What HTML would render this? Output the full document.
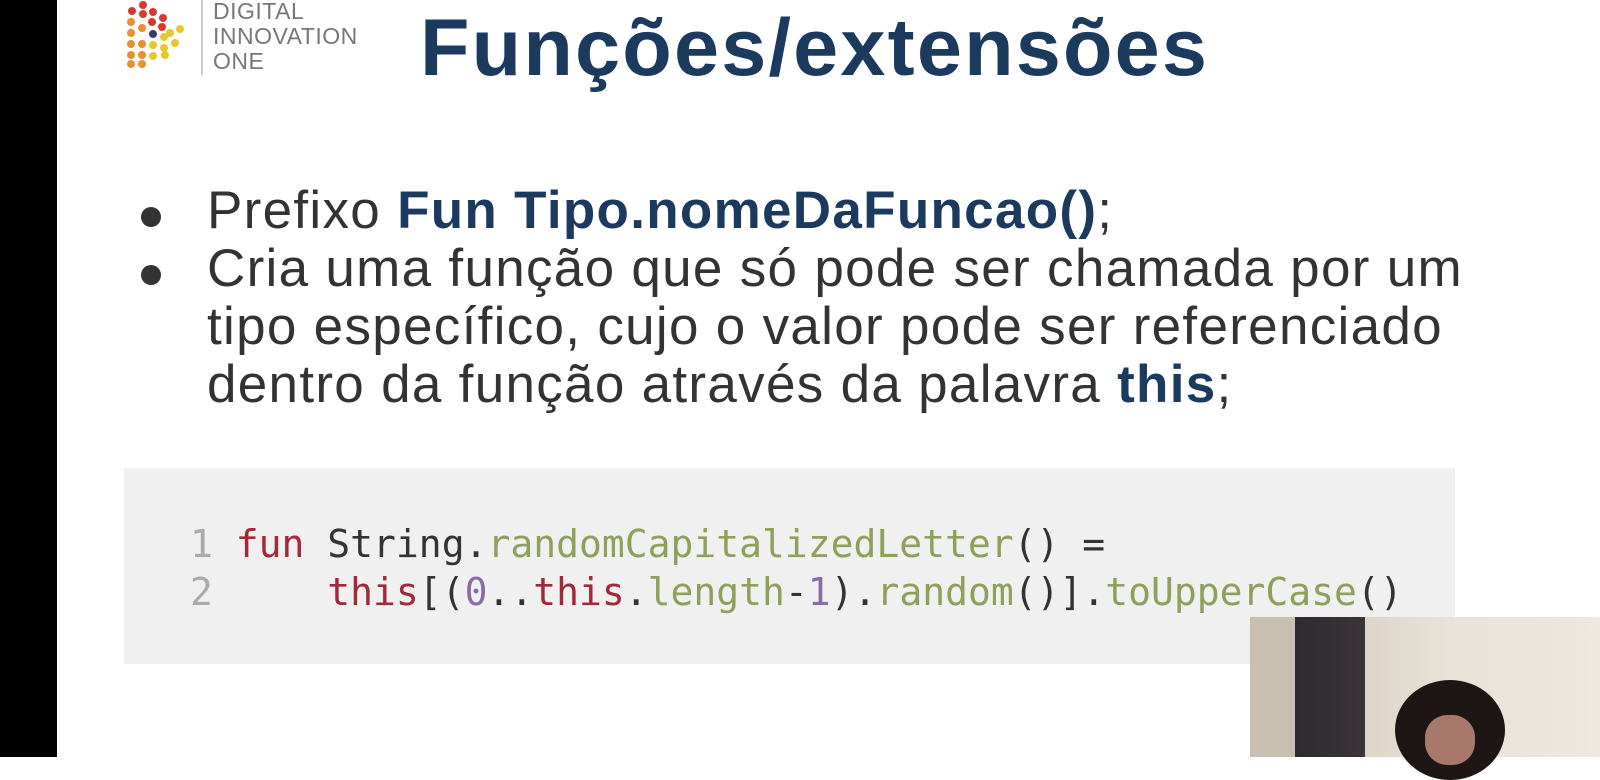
<!DOCTYPE html>
<html><head><meta charset="utf-8"><style>
body{margin:0;width:1600px;height:757px;overflow:hidden;background:#fff;position:relative;font-family:"Liberation Sans",sans-serif}
.blk{position:absolute;left:0;top:0;width:57px;height:757px;background:#000}
.t{position:absolute;left:420px;top:2px;font-size:81px;font-weight:bold;color:#1c3a5e;white-space:nowrap;letter-spacing:2.2px}
.logo-t{position:absolute;left:213px;top:-1px;font-size:23px;line-height:25px;color:#777;letter-spacing:0.5px}
.bar{position:absolute;left:201px;top:0;width:2px;height:75px;background:#ccc}
.b{position:absolute;left:207px;font-size:53px;color:#333;white-space:nowrap;letter-spacing:1.3px;line-height:60px}
.dot{position:absolute;left:141px;width:20px;height:20px;border-radius:50%;background:#333}
.code{position:absolute;left:124px;top:468px;width:1331px;height:196px;background:#f0f0f0}
.c{position:absolute;left:190px;font-family:"DejaVu Sans Mono",monospace;font-size:38px;white-space:pre;color:#333}
.n{color:#aaa}.k{color:#a2283a}.g{color:#8ea05a}.p{color:#8a6aa8}
.cam{position:absolute;left:1250px;top:617px;width:350px;height:140px;background:linear-gradient(90deg,#c9bfb0 0,#c9bfb0 45px,#2e2a30 45px,#3a3438 115px,#ddd5c8 115px,#e8e2d8 200px,#ede8e0 100%)}
.hair{position:absolute;left:1395px;top:680px;width:110px;height:100px;border-radius:50%;background:#1e1614}
.face{position:absolute;left:1425px;top:715px;width:50px;height:50px;border-radius:45%;background:#a8786a}
</style></head><body>
<div class="blk"></div>
<svg style="position:absolute;left:120px;top:0" width="70" height="72">
<g fill="#d63a2e"><circle cx="23" cy="5" r="4"/><circle cx="12" cy="11" r="4"/><circle cx="23" cy="14" r="4"/><circle cx="33" cy="12" r="4"/><circle cx="43" cy="18" r="4"/><circle cx="32" cy="22" r="4"/><circle cx="42" cy="27" r="4"/></g>
<g fill="#e8902e"><circle cx="11" cy="22" r="4"/><circle cx="11" cy="33" r="4"/><circle cx="11" cy="44" r="4"/><circle cx="11" cy="55" r="4"/><circle cx="22" cy="28" r="4"/><circle cx="22" cy="44" r="4"/><circle cx="22" cy="55" r="4"/><circle cx="11" cy="64" r="4"/><circle cx="22" cy="64" r="4"/></g>
<circle cx="33" cy="34" r="4" fill="#3a3a6a"/>
<g fill="#e8c828"><circle cx="50" cy="33" r="4"/><circle cx="60" cy="29" r="4"/><circle cx="44" cy="37" r="4"/><circle cx="33" cy="45" r="4"/><circle cx="44" cy="48" r="4"/><circle cx="55" cy="43" r="4"/><circle cx="33" cy="56" r="4"/><circle cx="45" cy="55" r="4"/></g>
</svg>
<div class="bar"></div>
<div class="logo-t">DIGITAL<br>INNOVATION<br>ONE</div>
<div class="t">Funções/extensões</div>
<div class="dot" style="top:207px"></div>
<div class="dot" style="top:265px"></div>
<div class="b" style="top:181px">Prefixo <b style="color:#1c3a5e">Fun Tipo.nomeDaFuncao()</b>;</div>
<div class="b" style="top:239px">Cria uma função que só pode ser chamada por um</div>
<div class="b" style="top:297px">tipo específico, cujo o valor pode ser referenciado</div>
<div class="b" style="top:355px">dentro da função através da palavra <b style="color:#1c3a5e">this</b>;</div>
<div class="code"></div>
<div class="c" style="top:522px"><span class="n">1</span> <span class="k">fun</span> String.<span class="g">randomCapitalizedLetter</span>() =</div>
<div class="c" style="top:570px"><span class="n">2</span>     <span class="k">this</span>[(<span class="p">0</span>..<span class="k">this</span>.<span class="g">length</span>-<span class="p">1</span>).<span class="g">random</span>()].<span class="g">toUpperCase</span>()</div>
<div class="cam"></div>
<div class="hair"></div>
<div class="face"></div>
</body></html>
